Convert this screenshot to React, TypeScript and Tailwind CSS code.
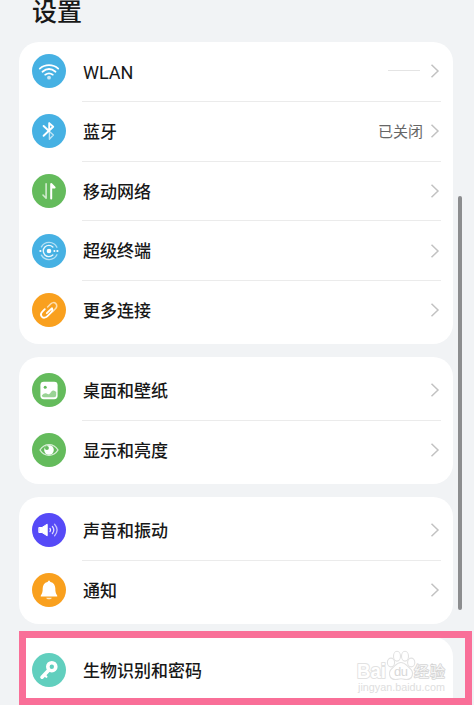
import React from "react";

type Item = {
    label: string;
    color: string;
    icon: React.ReactNode;
    value?: React.ReactNode;
};

const Chevron = () => (
    <svg className="h-4 w-[10px] shrink-0" viewBox="0 0 10 16" fill="none" stroke="#c2c2c2" strokeWidth="1.5">
        <path d="M1.5 1.7 8 8 1.5 14.3" />
    </svg>
);

// Every glyph is drawn on the 34px disc
const Glyph = ({ children }: { children: React.ReactNode }) => (
    <svg className="h-[34px] w-[34px]" viewBox="0 0 34 34" fill="none" stroke="#fff" strokeLinecap="round" strokeLinejoin="round">
        {children}
    </svg>
);

const WifiIcon = () => (
    <Glyph>
        <path d="M7.8 14.6C13 9.9 21 9.9 26.2 14.6" strokeWidth="1.8" />
        <path d="M10.5 17.7C14.5 14.4 19.5 14.4 23.5 17.7" strokeWidth="1.8" />
        <path d="M13.2 20.7C15.5 19 18.5 19 20.8 20.7" strokeWidth="1.7" />
        <circle cx="17" cy="23.7" r="1.9" fill="#fff" fillOpacity=".7" stroke="none" />
    </Glyph>
);

const BluetoothIcon = () => (
    <Glyph>
        <path d="M17 17 21.4 21 17.4 25.2V17" strokeWidth="1.4" strokeOpacity=".65" />
        <path d="M11.6 12 17 17" strokeWidth="1.9" />
        <path d="M11.6 21.8 21.2 12.7 17.2 9.1V17" strokeWidth="1.9" />
    </Glyph>
);

const DataIcon = () => (
    <Glyph>
        <path d="M14.1 9.7V24.2L11 21" strokeWidth="1.6" strokeOpacity=".7" />
        <path d="M19.2 24.6V10L22.6 13.5H20" strokeWidth="2" />
    </Glyph>
);

const SuperDeviceIcon = () => (
    <Glyph>
        <circle cx="17" cy="17" r="2.3" fill="#fff" stroke="none" />
        <path d="M20.8 13A5.6 5.6 0 1 0 20.8 21" strokeWidth="1.4" strokeOpacity=".9" />
        <path d="M9.4 12.8A8.8 8.8 0 0 1 24.9 13.2M9.4 21.2A8.8 8.8 0 0 0 24.9 20.8" strokeWidth="1.4" strokeOpacity=".6" />
        <circle cx="8.4" cy="17" r="1.1" fill="#fff" stroke="none" />
        <circle cx="25.4" cy="17" r="1.1" fill="#fff" stroke="none" />
        <circle cx="22.4" cy="17" r="1" fill="#fff" stroke="none" />
    </Glyph>
);

const LinkIcon = () => (
    <Glyph>
        <path d="M15.6 14 18.6 11C20.2 9.4 22.4 9.2 23.8 10.6C25.2 12 25 14.2 23.4 15.8L20.6 18.6" strokeWidth="1.6" strokeOpacity=".65" />
        <path d="M12.8 16.2 10.4 18.6C8.8 20.2 8.6 22.4 10 23.8C11.4 25.2 13.6 25 15.2 23.4L19 19.6C20.4 18.2 20.7 16.5 20 15.2L14.8 20.2" strokeWidth="1.8" />
    </Glyph>
);

const PictureIcon = () => (
    <Glyph>
        <rect x="8.4" y="8.8" width="17.2" height="17.4" rx="3.4" fill="#fff" stroke="none" />
        <circle cx="13.2" cy="14.3" r="1.5" fill="#64bb5c" stroke="none" />
        <path d="M9.8 22.4C11.8 20.5 13.2 19.7 15 20.8C16.7 21.8 17.5 21.1 18.7 19.4C20.5 17 22.3 17 24.2 19.1V22.3Q24.2 24.2 22.2 24.2H11.8Q9.8 24.2 9.8 22.4Z" fill="#64bb5c" fillOpacity=".65" stroke="none" />
    </Glyph>
);

const EyeIcon = () => (
    <Glyph>
        <path d="M8 17C12.5 9.8 21.5 9.8 26 17C21.5 24.2 12.5 24.2 8 17Z" strokeWidth="1.4" strokeOpacity=".75" />
        <circle cx="17" cy="17" r="4.8" fill="#fff" stroke="none" />
        <circle cx="14.9" cy="15" r="2" fill="#64bb5c" stroke="none" />
    </Glyph>
);

const SoundIcon = () => (
    <Glyph>
        <path d="M7.2 14.5H10L15.2 11.2V22.8L10 19.5H7.2Z" fill="#fff" strokeWidth="1" />
        <path d="M18 15.5Q19.2 17 18 18.5" strokeWidth="1.3" strokeOpacity=".9" />
        <path d="M20.4 13.5Q23.2 17 20.4 20.5" strokeWidth="1.3" strokeOpacity=".8" />
        <path d="M22.6 11.3Q27.6 17 22.6 22.7" strokeWidth="1.3" strokeOpacity=".65" />
    </Glyph>
);

const BellIcon = () => (
    <Glyph>
        <path d="M17 7.2 18.5 8.9C21.7 9.6 23.2 12.2 23.3 15.2C23.3 19 23.8 20.4 25.2 22.4Q25.7 23.6 24.5 23.6H9.5Q8.3 23.6 8.8 22.4C10.2 20.4 10.7 19 10.7 15.2C10.8 12.2 12.3 9.6 15.5 8.9Z" fill="#fff" stroke="none" />
        <path d="M14.2 24.7H19.8C19.4 26.7 14.6 26.7 14.2 24.7Z" fill="#fff" fillOpacity=".75" stroke="none" />
    </Glyph>
);

const KeyIcon = () => (
    <Glyph>
        <circle cx="19.8" cy="13.7" r="4" strokeWidth="3.6" />
        <path d="M16.4 17.4 10 24.2" strokeWidth="3.6" />
        <path d="M13 22.4 14.4 23.8" strokeWidth="2.2" />
    </Glyph>
);

const network: Item[] = [
    { label: "WLAN", color: "bg-[#46b1e3]", icon: <WifiIcon />, value: <span className="mb-[4px] mr-[3px] h-px w-8 bg-[#e4e4e4]" /> },
    { label: "蓝牙", color: "bg-[#46b1e3]", icon: <BluetoothIcon />, value: "已关闭" },
    { label: "移动网络", color: "bg-[#64bb5c]", icon: <DataIcon /> },
    { label: "超级终端", color: "bg-[#46b1e3]", icon: <SuperDeviceIcon /> },
    { label: "更多连接", color: "bg-[#f9a01e]", icon: <LinkIcon /> },
];

const display: Item[] = [
    { label: "桌面和壁纸", color: "bg-[#64bb5c]", icon: <PictureIcon /> },
    { label: "显示和亮度", color: "bg-[#64bb5c]", icon: <EyeIcon /> },
];

const sound: Item[] = [
    { label: "声音和振动", color: "bg-[#564af7]", icon: <SoundIcon /> },
    { label: "通知", color: "bg-[#f9a01e]", icon: <BellIcon /> },
];

const security: Item[] = [
    { label: "生物识别和密码", color: "bg-[#61cfbe]", icon: <KeyIcon /> },
];

const Row = ({ item, last }: { item: Item; last: boolean }) => (
    <li className="flex h-[59.75px] items-center pl-[12.6px]">
        <span className={`mb-[1px] flex h-[34px] w-[34px] shrink-0 items-center justify-center rounded-full ${item.color}`}>{item.icon}</span>
        <div className={`ml-[16.4px] mr-3 flex h-full flex-1 items-center justify-between border-b pr-px ${last ? "border-transparent" : "border-[#ebebeb]"}`}>
            <span className={`pl-px font-medium text-[#181818] ${item.label === "WLAN" ? "pt-[2px] text-[18px] font-normal" : "pt-[3px] text-[17px]"}`}>{item.label}</span>
            <span className="flex items-center gap-[7px] text-[15px] text-[#666]">
                {item.value && <span className="flex pt-0.5 leading-5">{item.value}</span>}
                <Chevron />
            </span>
        </div>
    </li>
);

const Card = ({ items, className }: { items: Item[]; className: string }) => (
    <ul className={`rounded-[20px] bg-white ${className}`}>
        {items.map((item, i) => (
            <Row key={item.label} item={item} last={i === items.length - 1} />
        ))}
    </ul>
);

const Watermark = () => (
    <div className="absolute left-[355px] top-[648px] h-[48px] w-[96px]">
        <svg className="h-full w-full" viewBox="0 0 96 48" fill="#fff" stroke="#e2e2e2" strokeWidth="1.1" strokeLinejoin="round" fontFamily="'Liberation Sans', 'Noto Sans CJK SC', sans-serif">
            <ellipse cx="36" cy="14.5" rx="3.6" ry="4.4" />
            <ellipse cx="42" cy="8.2" rx="3.5" ry="4.9" />
            <ellipse cx="50" cy="8.2" rx="3.5" ry="4.9" />
            <ellipse cx="56.2" cy="14.5" rx="3.6" ry="4.4" />
            <path d="M46 14.5C50 14.5 51.5 17.5 54.5 20C59.5 24 58 31.5 51.5 31.5C48.5 31.5 47.5 30.7 46 30.7C44.5 30.7 43.5 31.5 40.5 31.5C34 31.5 32.5 24 37.5 20C40.5 17.5 42 14.5 46 14.5Z" />
            <g paintOrder="stroke">
                <text x="2" y="30" fontSize="20" fontWeight="700" textLength="29" lengthAdjust="spacingAndGlyphs" strokeWidth="2">Bai</text>
                <text x="39" y="28" fontSize="13" textLength="14" fill="#d8d8d8" stroke="none">du</text>
                <text x="59" y="29" fontSize="15" textLength="31" stroke="#d6d6d6" strokeWidth="1.6" fillOpacity=".8">经验</text>
                <text x="3" y="43" fontSize="10" textLength="87" lengthAdjust="spacingAndGlyphs" fill="#dedede" stroke="none">jingyan.baidu.com</text>
            </g>
        </svg>
    </div>
);

const App = () => {
    return (
        <main className="relative h-[705px] w-[474px] overflow-hidden bg-[#f1f3f5] pl-[19px] pr-[21px] font-['Roboto','Noto_Sans_CJK_SC',sans-serif]">
            <header className="flex h-[42px] items-start pl-[13px] pt-px">
                <h1 className="text-[25px] font-medium leading-6 text-[#181818]">设置</h1>
            </header>

            <div className="flex flex-col gap-[13px]">
                <Card items={network} className="h-[302px]" />
                <Card items={display} className="h-[127px] pt-[4px]" />
                <Card items={sound} className="h-[127px] pt-[4px]" />
                <Card items={security} className="h-[127px] rounded-tl-none pt-[4px]" />
            </div>

            {/* Scrollbar */}
            <div className="absolute left-[458px] top-[196px] h-[414px] w-1 rounded-full bg-[#8c8d8f]" />

            {/* Highlight */}
            <div className="absolute left-[19px] top-[631px] h-[74px] w-[453px] border-[7px] border-[#f96f98]" />
            <Watermark />
        </main>
    );
};

export default App;
